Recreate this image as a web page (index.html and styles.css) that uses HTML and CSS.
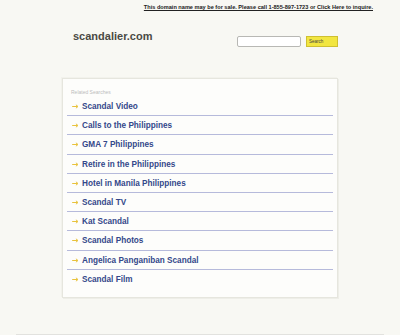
FILE: index.html
```html
<!DOCTYPE html>
<html lang="en">
  <head>
    <meta charset="UTF-8" />
    <title>scandalier.com</title>
    <link rel="stylesheet" href="styles.css">
  </head>
  <body>
    <div class="topbar">
      <a href="#">This domain name may be for sale. Please call 1-855-897-1723 or Click Here to inquire.</a>
    </div>
    <div class="wrap">
      <div class="header">
        <div class="logo">scandalier.com</div>
        <form class="search">
          <input type="text" class="q" />
          <button type="button" class="btn">Search</button>
        </form>
      </div>
      <div class="panel">
        <div class="label">Related Searches</div>
        <ul class="list">
          <li class="item"><a href="#"><svg viewBox="0 0 8 6"><path d="M0 3h6.5M4.5 1l2.5 2-2.5 2" /></svg>Scandal Video</a></li>
          <li class="item"><a href="#"><svg viewBox="0 0 8 6"><path d="M0 3h6.5M4.5 1l2.5 2-2.5 2" /></svg>Calls to the Philippines</a></li>
          <li class="item"><a href="#"><svg viewBox="0 0 8 6"><path d="M0 3h6.5M4.5 1l2.5 2-2.5 2" /></svg>GMA 7 Philippines</a></li>
          <li class="item"><a href="#"><svg viewBox="0 0 8 6"><path d="M0 3h6.5M4.5 1l2.5 2-2.5 2" /></svg>Retire in the Philippines</a></li>
          <li class="item"><a href="#"><svg viewBox="0 0 8 6"><path d="M0 3h6.5M4.5 1l2.5 2-2.5 2" /></svg>Hotel in Manila Philippines</a></li>
          <li class="item"><a href="#"><svg viewBox="0 0 8 6"><path d="M0 3h6.5M4.5 1l2.5 2-2.5 2" /></svg>Scandal TV</a></li>
          <li class="item"><a href="#"><svg viewBox="0 0 8 6"><path d="M0 3h6.5M4.5 1l2.5 2-2.5 2" /></svg>Kat Scandal</a></li>
          <li class="item"><a href="#"><svg viewBox="0 0 8 6"><path d="M0 3h6.5M4.5 1l2.5 2-2.5 2" /></svg>Scandal Photos</a></li>
          <li class="item"><a href="#"><svg viewBox="0 0 8 6"><path d="M0 3h6.5M4.5 1l2.5 2-2.5 2" /></svg>Angelica Panganiban Scandal</a></li>
          <li class="item last"><a href="#"><svg viewBox="0 0 8 6"><path d="M0 3h6.5M4.5 1l2.5 2-2.5 2" /></svg>Scandal Film</a></li>
        </ul>
      </div>
      <div class="footer"></div>
    </div>
  </body>
</html>
```
FILE: styles.css
```css
ul,
li {
  list-style: none;
  padding: 0;
  margin: 0;
}
body {
  margin: 0;
  background-color: #f8f8f3;
  font-family: "Liberation Sans", Arial, sans-serif;
}
.topbar {
  height: 14px;
  line-height: 14px;
  text-align: right;
  padding-right: 27px;
  font-size: 5.6px;
  font-weight: bold;
}
.topbar a {
  color: #222;
  text-decoration: underline;
}
.wrap {
  width: 276px;
  margin: 0 auto;
}
.header {
  display: flex;
  justify-content: space-between;
  height: 64px;
}
.logo {
  padding: 15px 0 0 11px;
  font-size: 11px;
  font-weight: bold;
  color: #4a4a44;
  line-height: 14px;
}
.search {
  display: flex;
  gap: 5px;
  margin: 0;
  padding-top: 22px;
}
.search .q {
  width: 64px;
  height: 11px;
  box-sizing: border-box;
  border: 1px solid #b8b8b4;
  border-radius: 2px;
  background-color: #fff;
  padding: 0;
}
.search .btn {
  width: 32px;
  height: 11px;
  box-sizing: border-box;
  padding: 0 0 0 2px;
  border: 1px solid #cfc030;
  background-color: #f2e640;
  font-family: "Liberation Sans", Arial, sans-serif;
  font-size: 4.5px;
  color: #444;
  text-align: left;
  line-height: 9px;
}
.panel {
  background-color: #fdfdfb;
  border: 1px solid #e6e6de;
  box-shadow: 1px 1px 0 #eeeee8, -1px -1px 0 #f2f2ec;
  padding: 8px 4px 8px;
}
.label {
  padding-left: 4px;
  font-size: 5px;
  color: #bcbcbc;
  line-height: 10px;
}
.list .item {
  height: 19.2px;
  box-sizing: border-box;
  border-bottom: 1px solid #b6badb;
}
.list .item.last {
  border-bottom: none;
}
.item a {
  display: flex;
  align-items: center;
  gap: 3px;
  padding-left: 5px;
  height: 19px;
  font-size: 8.2px;
  font-weight: bold;
  color: #34488a;
  text-decoration: none;
}
.item svg {
  width: 7px;
  height: 5px;
  fill: none;
  stroke: #e8c23c;
  stroke-width: 1.2;
}
.footer {
  width: 368px;
  margin: 36px 0 0 -46px;
  height: 2px;
  background-color: #e2e2de;
}
```
